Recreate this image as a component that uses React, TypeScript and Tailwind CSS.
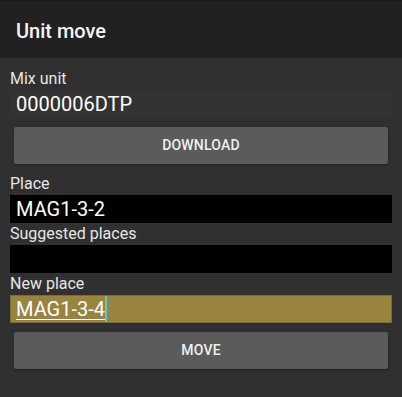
export default function App() {
  const font = { fontFamily: "Roboto, 'Noto Sans', sans-serif" };
  return (
    <div className="w-[402px] h-[397px] bg-[#303030] text-white flex flex-col" style={font}>
      {/* toolbar */}
      <header className="h-[58px] shrink-0 bg-[#212121] border-t border-[#1a1a1a] flex items-center px-4 pt-[2px]">
        <h1 className="text-[20px] font-medium text-[#f5f5f5] leading-none">Unit move</h1>
      </header>

      <div className="flex flex-col px-[10px] pt-[10px]">
        <label className="text-[16px] leading-[22px] text-[#e6e6e6]">Mix unit</label>
        <div className="h-[28px] bg-[#333333] flex items-center pl-[6px] text-[20px] text-white">0000006DTP</div>

        <button className="mx-1 mt-[9px] h-[37px] bg-[#5b5b5b] rounded-[2px] text-[14px] font-medium text-[#f0f0f0] tracking-[0.2px] shadow-[0_1px_2px_rgba(0,0,0,0.35)]">
          DOWNLOAD
        </button>

        <label className="mt-[9px] text-[16px] leading-[22px] text-[#e6e6e6]">Place</label>
        <div className="h-[28px] bg-black flex items-center pl-[6px] text-[20px] text-white">MAG1-3-2</div>

        <label className="text-[16px] leading-[22px] text-[#e6e6e6]">Suggested places</label>
        <div className="h-[28px] bg-black" />

        <label className="text-[16px] leading-[22px] text-[#e6e6e6]">New place</label>
        <div className="h-[28px] bg-[#98843f] border border-[#7d6d33] flex items-stretch pl-[5px] text-[20px] text-white">
          <span className="flex items-center underline decoration-1 underline-offset-[3px]">MAG1-3-4</span>
          <span className="w-[2px] bg-[#5ec8d0]" />
        </div>

        <button className="mx-1 mt-[9px] h-[37px] bg-[#5b5b5b] rounded-[2px] text-[14px] font-medium text-[#f0f0f0] tracking-[0.2px] shadow-[0_1px_2px_rgba(0,0,0,0.35)]">
          MOVE
        </button>
      </div>
    </div>
  );
}
